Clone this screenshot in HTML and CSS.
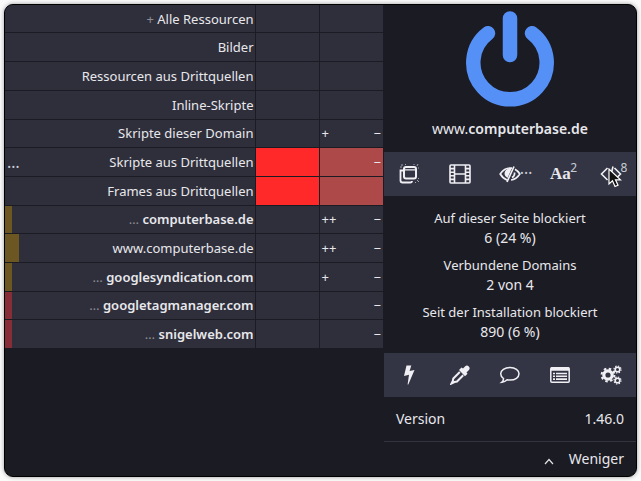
FILE: index.html
```html
<!DOCTYPE html>
<html lang="de">
<head>
<meta charset="utf-8">
<title>Firewall</title>
<link rel="stylesheet" href="styles.css">
</head>
<body>
<main class="popup">
  <section class="firewall">
    <table class="rules">
      <colgroup><col><col class="rule-col"><col class="rule-col"></colgroup>
      <tbody>
        <tr><th scope="row"><span class="dim">+</span> Alle Ressourcen</th><td></td><td></td></tr>
        <tr><th scope="row">Bilder</th><td></td><td></td></tr>
        <tr><th scope="row">Ressourcen aus Drittquellen</th><td></td><td></td></tr>
        <tr><th scope="row">Inline-Skripte</th><td></td><td></td></tr>
        <tr><th scope="row">Skripte dieser Domain</th><td></td><td><div class="counts"><span>+</span><span>−</span></div></td></tr>
        <tr><th scope="row"><div class="split"><span class="more">…</span><span>Skripte aus Drittquellen</span></div></th><td class="block"></td><td class="block-inherit"><div class="counts"><span></span><span>−</span></div></td></tr>
        <tr><th scope="row">Frames aus Drittquellen</th><td class="block"></td><td class="block-inherit"></td></tr>
        <tr><th scope="row" class="mixed"><span class="dim">…</span> <b>computerbase.de</b></th><td></td><td><div class="counts"><span>++</span><span>−</span></div></td></tr>
        <tr><th scope="row" class="mixed wide">www.computerbase.de</th><td></td><td><div class="counts"><span>++</span><span>−</span></div></td></tr>
        <tr><th scope="row" class="mixed"><span class="dim">…</span> <b>googlesyndication.com</b></th><td></td><td><div class="counts"><span>+</span><span>−</span></div></td></tr>
        <tr><th scope="row" class="blocked"><span class="dim">…</span> <b>googletagmanager.com</b></th><td></td><td><div class="counts"><span></span><span>−</span></div></td></tr>
        <tr><th scope="row" class="blocked"><span class="dim">…</span> <b>snigelweb.com</b></th><td></td><td><div class="counts"><span></span><span>−</span></div></td></tr>
      </tbody>
    </table>
  </section>
  <section class="panel">
    <button class="power" aria-label="Filterung umschalten">
      <svg viewBox="0 0 88 96" width="88" height="96" fill="none" stroke="#5590f6" stroke-width="14.5" stroke-linecap="round"><path d="M22 22.3A36.7 36.7 0 1 0 66 22.3M44 7.5V44"/></svg>
    </button>
    <p class="host">www.<b>computerbase.de</b></p>
    <div class="toolbar">
      <button aria-label="Popups"><svg viewBox="0 0 20 20" width="20" height="20" fill="none" stroke="#f0f0f4" stroke-width="2"><rect x="5" y="3" width="12" height="11.500" rx="2"/><path d="M5 5.800H17" stroke-width="1.300"/><path d="M4 6.500H1.500V16.500q0 2 2 2H11q2 0 2-1.500" stroke-width="1.800"/><path d="M3 0v2M1 3h2M6.500 0v1M15 0v1M19 0l-1 2M20 4h-1M18 16l2 2M19 14.500h1M16 18.500h1" stroke-width="1" opacity=".6"/></svg></button>
      <button aria-label="Große Medien"><svg viewBox="0 0 22 20" width="22" height="20" fill="none" stroke="#f0f0f4" stroke-width="1.600"><rect x="1" y="1" width="20" height="18" rx="1"/><path d="M5.500 1v18M16.500 1v18M5.500 10h11M1 4.600h4M1 8.200h4M1 11.800h4M1 15.400h4M17 4.600h4M17 8.200h4M17 11.800h4M17 15.400h4"/></svg></button>
      <button aria-label="Kosmetische Filter"><svg viewBox="0 0 22 18" width="22" height="18" fill="none" stroke="#f0f0f4" stroke-width="1.700"><path d="M8 15Q4 13.500 1.200 9q4-6 9.800-6l2 .2M16 4.300Q19 6 20.800 9q-3.500 5.500-8.800 6M15 1.500 8 17M15.500 7.500q.5 3.500-2.500 5"/><path d="M8.500 4Q5.500 5.500 5.500 9q0 2 3 4l4-9z" fill="#f0f0f4" stroke="none"/></svg><span class="badge dots">…</span></button>
      <button aria-label="Externe Schriften"><span class="aa">Aa</span><span class="badge">2</span></button>
      <button aria-label="JavaScript"><svg viewBox="0 0 22 18" width="22" height="18" fill="none" stroke="#f0f0f4" stroke-width="1.600"><path d="M7.500 3 1.500 9l6 6M14.500 3l6 6-6 6M13 1.500 9.500 16"/></svg><span class="badge">8</span>
        <svg class="pointer" viewBox="0 0 14 20" width="14" height="20"><path d="M1 1v15l3.500-3.200L7 18.500l3-1.300-2.500-5.400h5z" fill="#111" stroke="#fff" stroke-width="1.200"/></svg></button>
    </div>
    <dl class="stats">
      <div><dt>Auf dieser Seite blockiert</dt><dd>6 (24 %)</dd></div>
      <div><dt>Verbundene Domains</dt><dd>2 von 4</dd></div>
      <div><dt>Seit der Installation blockiert</dt><dd>890 (6 %)</dd></div>
    </dl>
    <div class="toolbar">
      <button aria-label="Element blockieren"><svg viewBox="0 0 20 20" width="20" height="20" fill="#f0f0f4"><path d="M7.500.5h4.800L10.600 6l4.900-1L9.300 19.500H8.600L10 9.800 5 11z"/></svg></button>
      <button aria-label="Element auswählen"><svg viewBox="0 0 20 20" width="20" height="20" fill="#f0f0f4"><path d="M11.500 2.500l1.500 1L15 1.400q2-1.700 3.800 0 1.800 2-.1 3.900L16.500 7.500l1 1.200-2.500 2.600L9 5z"/><path d="M9.800 7 3.300 13.500 2.800 16 1.500 18.500 4.500 17 7 16.500 13.200 10.300" fill="none" stroke="#f0f0f4" stroke-width="2"/></svg></button>
      <button aria-label="Problem melden"><svg viewBox="0 0 22 20" width="22" height="20" fill="none" stroke="#f0f0f4" stroke-width="1.500"><path d="M11 2.500c5.300 0 9 2.700 9 6.300s-3.700 6.300-9 6.300q-1.500 0-2.900-.3-2 2-5.100 2.400 1.500-1.200 1.500-3.700Q1.700 11.600 1.700 8.800C1.700 5.200 5.700 2.500 11 2.500z"/></svg></button>
      <button aria-label="Protokoll"><svg viewBox="0 0 20 18" width="20" height="18" fill="none" stroke="#f0f0f4" stroke-width="1.500"><rect x=".8" y="1.800" width="18.400" height="14.400" rx="1"/><path d="M1 3h18" stroke-width="3.600"/><path d="M3 7.500h2M6 7.500h11M3 10.300h2M6 10.300h11M3 13.100h2M6 13.100h11" stroke-width="1.600"/></svg></button>
      <button aria-label="Einstellungen"><svg viewBox="0 0 22 20" width="22" height="20" fill="none" stroke="#f0f0f4"><circle cx="8" cy="10" r="4.200" stroke-width="3.200"/><circle cx="8" cy="10" r="6.400" stroke-width="2" stroke-dasharray="2.500 2.526"/><circle cx="17.500" cy="4.500" r="2.300" stroke-width="1.600"/><circle cx="17.500" cy="4.500" r="3.500" stroke-width="1.200" stroke-dasharray="1.400 1.349"/><circle cx="17.500" cy="15.500" r="2.300" stroke-width="1.600"/><circle cx="17.500" cy="15.500" r="3.500" stroke-width="1.200" stroke-dasharray="1.400 1.349"/></svg></button>
    </div>
    <div class="version"><span>Version</span><span>1.46.0</span></div>
    <button class="less"><svg viewBox="0 0 10 12" width="10" height="12" fill="none" stroke="#e0e0e4" stroke-width="1.200"><path d="M1 11l4-4.500L9 11"/></svg>Weniger</button>
  </section>
</main>
</body>
</html>
```
FILE: styles.css
```css
* { box-sizing: border-box; }

body {
  margin: 0;
  padding: 4px;
  background: #fbfbfb;
  color: #e8e8ec;
  font: 14px/20px "Noto Sans", sans-serif;
}

p, dl, dd { margin: 0; }

b { font-weight: 600; }

button {
  border: 0;
  padding: 0;
  background: none;
  color: inherit;
  font: inherit;
}

.popup {
  display: grid;
  grid-template-columns: minmax(0, 1fr) 252px;
  column-gap: 1px;
  border: 1px solid #000;
  border-radius: 9px;
  overflow: hidden;
  background: #1b1b23;
  box-shadow: 0 0 4px #999;
}

.rules {
  width: 100%;
  height: 344px;
  table-layout: fixed;
  border-collapse: collapse;
  font-size: 13px;
  line-height: 20px;
}

.rule-col { width: 64px; }

.rules th,
.rules td {
  padding: 0 2px;
  background: #2f2f3b;
  border-bottom: 1px solid #1b1b23;
  font-weight: 400;
}

.rules th {
  padding-right: 1px;
  text-align: right;
}

.rules td { border-left: 1px solid #1b1b23; }

.rules .mixed { background: linear-gradient(#6c5621, #6c5621) left / 7px no-repeat #2f2f3b; }
.rules .wide { background-size: 14px; }
.rules .blocked { background: linear-gradient(#862d37, #862d37) left / 7px no-repeat #2f2f3b; }
.rules .block { background: #ff2929; }
.rules .block-inherit { background: #ae4949; }

.dim { color: #8e8e96; }

.split,
.counts {
  display: flex;
  justify-content: space-between;
}

.more {
  color: #c8ccd4;
  font-size: 16px;
}

.panel {
  display: flex;
  flex-direction: column;
}

.power {
  display: flex;
  justify-content: center;
  padding-top: 6px;
}

.host {
  padding: 12px 0 13px;
  text-align: center;
}

.toolbar {
  display: grid;
  grid-template-columns: repeat(5, 1fr);
  height: 44px;
  background: #333544;
}

.toolbar button {
  position: relative;
  display: flex;
  align-items: center;
  justify-content: center;
}

.badge {
  position: absolute;
  left: 35px;
  top: 8px;
  color: #c8ccd4;
  font-size: 12px;
  line-height: 16px;
}

.dots {
  top: 8px;
  font-size: 16px;
}

.aa { font: bold 17px/20px "Liberation Serif", serif; }

.pointer {
  position: absolute;
  left: 22px;
  top: 16px;
}

.stats {
  display: grid;
  gap: 7px;
  padding: 12px 0 11px;
  text-align: center;
}

.stats dt { font-size: 13px; }

.version {
  display: flex;
  justify-content: space-between;
  padding: 12px;
  border-bottom: 1px solid #33333f;
}

.less {
  display: flex;
  align-items: center;
  justify-content: flex-end;
  gap: 15px;
  padding: 7px 12px;
}
```
